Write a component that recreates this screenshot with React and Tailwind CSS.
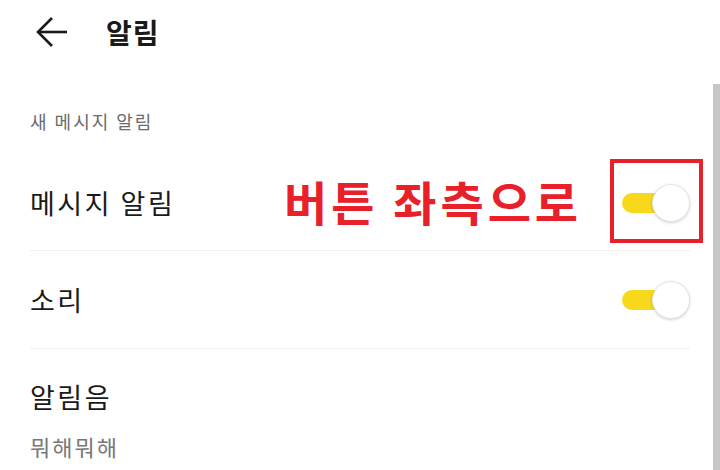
import React, { useState } from 'react';

const KR = { fontFamily: '"Noto Sans CJK KR", "Noto Sans", sans-serif' };

function Toggle({ on, onChange }) {
  return (
    <button
      onClick={() => onChange(!on)}
      className="relative h-[40px] w-[68px] shrink-0"
      aria-pressed={on}
    >
      <span
        className={`absolute left-0 top-[10px] h-[20px] w-[60px] rounded-full ${on ? 'bg-[#f8d81a]' : 'bg-[#d0d0d0]'}`}
      />
      <span
        className={`absolute top-[1px] h-[38px] w-[38px] rounded-full border border-[#e4e4e4] bg-white shadow-[0_1px_3px_rgba(0,0,0,0.18)] ${on ? 'right-0' : 'left-[-6px]'}`}
      />
    </button>
  );
}

export default function App() {
  const [msgOn, setMsgOn] = useState(true);
  const [soundOn, setSoundOn] = useState(true);

  return (
    <div className="relative h-[470px] w-[720px] overflow-hidden bg-white text-[#1a1a1a]" style={KR}>
      {/* header */}
      <div className="flex h-[64px] items-center">
        <svg className="ml-[36px] h-[30px] w-[32px]" viewBox="0 0 32 30" fill="none" stroke="#1a1a1a" strokeWidth="2.6">
          <path d="M2 15 H31" />
          <path d="M16 1 L2 15 L16 29" />
        </svg>
        <div className="ml-[38px] text-[28px] font-bold leading-[36px] tracking-[1px]">알림</div>
      </div>

      {/* section label */}
      <div className="ml-[30px] mt-[45px] text-[18px] leading-[24px] tracking-[2px] text-[#6b6b6b]">새 메시지 알림</div>

      <div className="mx-[30px] mt-[22px] tracking-[2.5px]">
        <div className="relative flex h-[96px] items-center justify-between border-b border-[#f2f2f2]">
          <span className="text-[27px] leading-[34px]">메시지 알림</span>
          <span className="absolute left-[254px] top-[17px] text-[47px] font-bold leading-[58px] tracking-[4px] text-[#e8202a]">
            버튼 좌측으로
          </span>
          <Toggle on={msgOn} onChange={setMsgOn} />
          <span className="pointer-events-none absolute right-[-13px] top-[4px] h-[84px] w-[93px] border-[4px] border-[#e8202a]" />
        </div>

        <div className="flex h-[98px] items-center justify-between border-b border-[#f2f2f2]">
          <span className="text-[27px] leading-[34px]">소리</span>
          <Toggle on={soundOn} onChange={setSoundOn} />
        </div>

        <div className="pt-[31px]">
          <div className="text-[27px] leading-[34px]">알림음</div>
          <div className="mt-[18px] text-[22px] leading-[28px] tracking-[2px] text-[#777777]">뭐해뭐해</div>
        </div>
      </div>

      {/* scrollbar */}
      <div className="absolute right-0 top-[84px] h-[386px] w-[7px] bg-[#c6c6c6]" />
    </div>
  );
}
